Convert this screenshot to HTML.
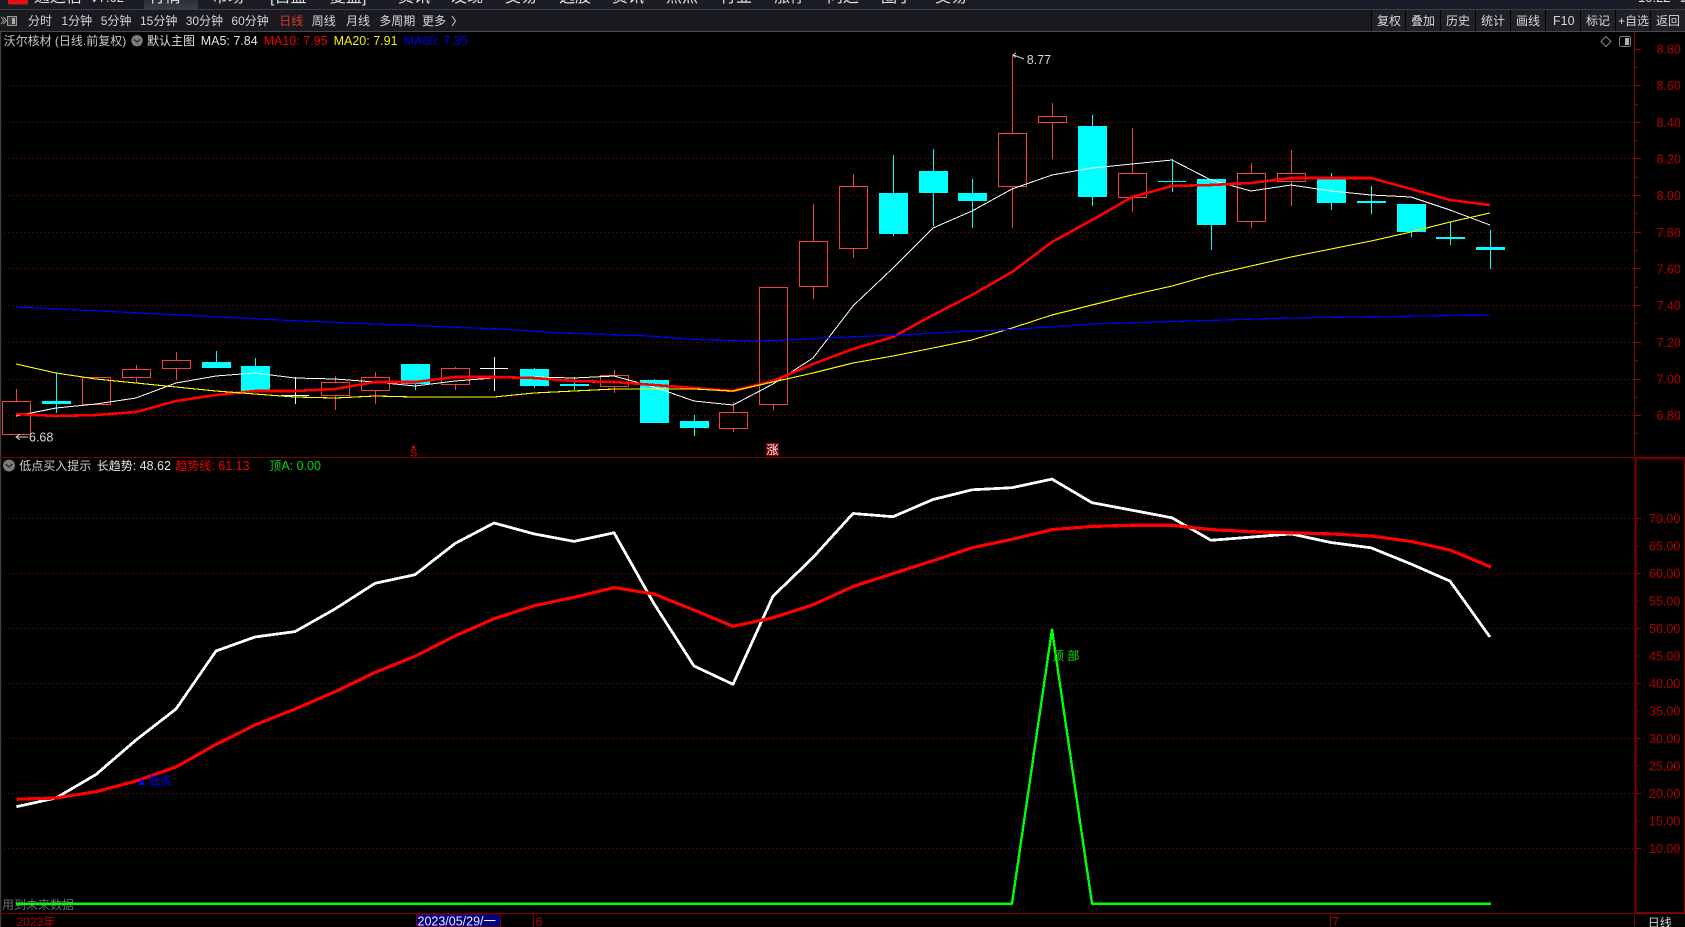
<!DOCTYPE html>
<html lang="zh"><head><meta charset="utf-8"><title>沃尔核材</title>
<style>
html,body{margin:0;padding:0;background:#000;width:1685px;height:927px;overflow:hidden}
svg{display:block;position:absolute;left:0;top:0}
text{font-family:"Liberation Sans","Noto Sans CJK SC",sans-serif;font-size:12px;white-space:pre}
.n{font-size:12.5px}
.ax{font-size:12.5px;fill:#b40000}
.tb{fill:#d6d6d6}
.top{font-size:16px;fill:#e0e0e0}
</style></head><body>
<svg width="1685" height="927" viewBox="0 0 1685 927" xmlns="http://www.w3.org/2000/svg">
<defs><linearGradient id="tab" x1="0" y1="0" x2="0" y2="1"><stop offset="0" stop-color="#2a2e37"/><stop offset="1" stop-color="#383c46"/></linearGradient></defs>
<rect width="1685" height="927" fill="#000"/>

<!-- top menu clipped -->
<rect x="0" y="0" width="1685" height="9" fill="#1a1d25"/>
<rect x="144" y="0" width="54" height="9" fill="url(#tab)"/>
<rect x="8" y="-3" width="20" height="7.5" rx="2" fill="#e01010"/>
<text class="top" x="34" y="2">通达信</text><text class="top" x="90" y="2" style="font-size:13px">V7.62</text>
<text class="top" x="149" y="2">行情</text><text class="top" x="212" y="2">市场</text>
<text class="top" x="270" y="2">[自盘</text><text class="top" x="330" y="2">复盘]</text>
<text class="top" x="398" y="2">资讯</text><text class="top" x="451" y="2">发现</text><text class="top" x="505" y="2">交易</text>
<text class="top" x="559" y="2">选股</text><text class="top" x="612" y="2">资讯</text><text class="top" x="666" y="2">热点</text>
<text class="top" x="720" y="2">行业</text><text class="top" x="774" y="2">涨停</text><text class="top" x="827" y="2">问达</text>
<text class="top" x="881" y="2">圈子</text><text class="top" x="935" y="2">交易</text>
<text class="top" x="1638" y="2" style="font-size:13px">10:22</text><text class="top" x="1680" y="2">二</text>

<!-- toolbar -->
<rect x="0" y="9" width="1685" height="1" fill="#3b3e46"/>
<rect x="0" y="10" width="1685" height="21" fill="#1b1b1f"/>
<rect x="0" y="31" width="1685" height="1" fill="#4a4a4e"/>
<rect x="1372" y="10" width="313" height="21" fill="#212125"/>
<path d="M1371.5 10V31M1405.5 10V31M1440.5 10V31M1475.5 10V31M1510.5 10V31M1545.5 10V31M1580.5 10V31M1615.5 10V31M1650.5 10V31" stroke="#050505" stroke-width="1"/>
<path d="M1 17l3 3.5-3 3.5M3.5 17l3 3.5-3 3.5" fill="none" stroke="#999" stroke-width="1"/>
<rect x="7.5" y="16.5" width="9" height="9" fill="#3a3a3a" stroke="#999"/>
<rect x="12" y="18" width="3" height="6" fill="#aaa"/>
<text class="tb" x="28" y="25">分时</text>
<text class="tb" x="61.4" y="25">1分钟</text>
<text class="tb" x="100.7" y="25">5分钟</text>
<text class="tb" x="140" y="25">15分钟</text>
<text class="tb" x="185.7" y="25">30分钟</text>
<text class="tb" x="231.4" y="25">60分钟</text>
<text x="279.3" y="25" fill="#e23030">日线</text>
<text class="tb" x="311.8" y="25">周线</text>
<text class="tb" x="346" y="25">月线</text>
<text class="tb" x="379.3" y="25">多周期</text>
<text class="tb" x="422" y="25">更多</text>
<path d="M452 16l3.5 5-3.5 5" fill="none" stroke="#d0d0d0" stroke-width="1"/>
<text class="tb" x="1377" y="25">复权</text>
<text class="tb" x="1411" y="25">叠加</text>
<text class="tb" x="1446" y="25">历史</text>
<text class="tb" x="1481" y="25">统计</text>
<text class="tb" x="1516" y="25">画线</text>
<text class="tb n" x="1553" y="25">F10</text>
<text class="tb" x="1586" y="25">标记</text>
<text class="tb" x="1618" y="25">+自选</text>
<text class="tb" x="1656" y="25">返回</text>

<!-- legend -->
<text x="3.6" y="45" fill="#c8c8c8">沃尔核材 (日线.前复权)</text>
<circle cx="137" cy="40.7" r="5.7" fill="#7c7c7c"/><path d="M134 39.5l3 2.5 3-2.5" fill="none" stroke="#222" stroke-width="1.2"/>
<text x="147" y="45" fill="#e0e0e0">默认主图</text>
<text class="n" x="200.7" y="45" fill="#e4e4e4">MA5: 7.84</text>
<text class="n" x="263.6" y="45" fill="#f00000">MA10: 7.95</text>
<text class="n" x="333.6" y="45" fill="#f0f000">MA20: 7.91</text>
<text class="n" x="403.6" y="45" fill="#0000e0">MA60: 7.35</text>
<path d="M1606 36.5l5 5-5 5-5-5z" fill="none" stroke="#8a8a8a"/>
<rect x="1619.5" y="36.5" width="11" height="10" rx="2" fill="none" stroke="#808080"/>
<rect x="1625" y="38" width="4" height="7" fill="#b0b0b0"/>

<!-- grids -->
<path d="M0 85.5H1634M0 122.5H1634M0 158.5H1634M0 195.5H1634M0 232.5H1634M0 268.5H1634M0 305.5H1634M0 342.5H1634M0 379.5H1634M0 415.5H1634M0 518.5H1634M0 573.5H1634M0 628.5H1634M0 683.5H1634M0 738.5H1634M0 793.5H1634M0 848.5H1634" stroke="#900000" stroke-width="1" stroke-dasharray="1 3" fill="none" shape-rendering="crispEdges"/>

<!-- frame -->
<path d="M0.5 32V927" stroke="#3c3c3c" stroke-width="1.5"/>
<path d="M0 457.5H1685M0 913.5H1634" stroke="#800000" stroke-width="1"/>
<path d="M1634.5 32V458M1634.5 914V927" stroke="#800000" stroke-width="1"/>
<path d="M1635.5 458V914M1635 913H1685" stroke="#800000" stroke-width="2" fill="none"/>
<path d="M1635 459H1684.5V913" stroke="#800000" stroke-width="1.2" fill="none"/>

<!-- upper axis -->
<g stroke="#a00000" stroke-width="1" fill="none" shape-rendering="crispEdges">
<path d="M1635 49.5h6M1635 85.5h6M1635 122.5h6M1635 158.5h6M1635 195.5h6M1635 232.5h6M1635 268.5h6M1635 305.5h6M1635 342.5h6M1635 379.5h6M1635 415.5h6"/>
<path d="M1635 67.5h3M1635 104.5h3M1635 140.5h3M1635 177.5h3M1635 213.5h3M1635 250.5h3M1635 287.5h3M1635 323.5h3M1635 360.5h3M1635 397.5h3M1635 433.5h3"/>
<path d="M1636 518.5h5M1636 573.5h5M1636 628.5h5M1636 683.5h5M1636 738.5h5M1636 793.5h5M1636 848.5h5M1636 546h3M1636 601h3M1636 656h3M1636 711h3M1636 766h3M1636 821h3"/>
</g>
<text class="ax" x="1656.5" y="53.5">8.80</text>
<text class="ax" x="1656.5" y="90">8.60</text>
<text class="ax" x="1656.5" y="127">8.40</text>
<text class="ax" x="1656.5" y="163.5">8.20</text>
<text class="ax" x="1656.5" y="200">8.00</text>
<text class="ax" x="1656.5" y="237">7.80</text>
<text class="ax" x="1656.5" y="273.5">7.60</text>
<text class="ax" x="1656.5" y="310">7.40</text>
<text class="ax" x="1656.5" y="347">7.20</text>
<text class="ax" x="1656.5" y="383.5">7.00</text>
<text class="ax" x="1656.5" y="420">6.80</text>
<text class="ax" x="1649" y="523">70.00</text>
<text class="ax" x="1649" y="550.5">65.00</text>
<text class="ax" x="1649" y="578">60.00</text>
<text class="ax" x="1649" y="605.5">55.00</text>
<text class="ax" x="1649" y="633">50.00</text>
<text class="ax" x="1649" y="660.5">45.00</text>
<text class="ax" x="1649" y="688">40.00</text>
<text class="ax" x="1649" y="715.5">35.00</text>
<text class="ax" x="1649" y="743">30.00</text>
<text class="ax" x="1649" y="770.5">25.00</text>
<text class="ax" x="1649" y="798">20.00</text>
<text class="ax" x="1649" y="825.5">15.00</text>
<text class="ax" x="1649" y="853">10.00</text>

<!-- candles -->
<g shape-rendering="crispEdges">
<g fill="none" stroke="#f04040" stroke-width="1">
<path d="M16.5 389V401M96.5 377V377M136.5 365V369M136.5 378V383M176.5 352V360M176.5 369V380M335.5 376V382M335.5 396V410M375.5 372V377M375.5 391V404M455.5 367V368M455.5 385V390M614.5 370V375M614.5 387V393M733.5 402V412M733.5 429V432M773.5 404V410M813.5 204V241M813.5 287V299M853.5 174V186M853.5 249V258M1012.5 55V133M1012.5 187V228M1052.5 103V116M1052.5 123V159M1132.5 128V173M1132.5 198V212M1251.5 163V173M1251.5 222V228M1291.5 150V173M1291.5 182V206"/>
<rect x="2.5" y="401.5" width="28" height="33"/>
<rect x="82.5" y="377.5" width="28" height="27"/>
<rect x="122.5" y="369.5" width="28" height="8"/>
<rect x="162.5" y="360.5" width="28" height="8"/>
<rect x="321.5" y="382.5" width="28" height="13"/>
<rect x="361.5" y="377.5" width="28" height="13"/>
<rect x="441.5" y="368.5" width="28" height="16"/>
<rect x="600.5" y="375.5" width="28" height="11"/>
<rect x="719.5" y="412.5" width="28" height="16"/>
<rect x="759.5" y="287.5" width="28" height="117"/>
<rect x="799.5" y="241.5" width="28" height="45"/>
<rect x="839.5" y="186.5" width="28" height="62"/>
<rect x="998.5" y="133.5" width="28" height="53"/>
<rect x="1038.5" y="116.5" width="28" height="6"/>
<rect x="1118.5" y="173.5" width="28" height="24"/>
<rect x="1237.5" y="173.5" width="28" height="48"/>
<rect x="1277.5" y="173.5" width="28" height="8"/>
</g>
<g fill="#00ffff">
<path d="M56.5 373V413M216.5 351V362M255.5 358V366M415.5 384V390M534.5 368V388M574.5 377V390M654.5 379V380M694.5 415V436M893.5 155V236M933.5 149V226M972.5 179V228M1092.5 115V206M1211.5 225V250M1331.5 173V210M1371.5 186V214M1411.5 232V237M1450.5 222V245M1490.5 230V269M1172.5 159V192M1158 181.5H1186" stroke="#00ffff" stroke-width="1"/>
<rect x="42" y="401" width="29" height="3"/>
<rect x="202" y="362" width="29" height="6"/>
<rect x="241" y="366" width="29" height="25"/>
<rect x="401" y="364" width="29" height="20"/>
<rect x="520" y="369" width="29" height="17"/>
<rect x="560" y="384" width="29" height="2"/>
<rect x="640" y="380" width="29" height="43"/>
<rect x="680" y="421" width="29" height="7"/>
<rect x="879" y="193" width="29" height="41"/>
<rect x="919" y="171" width="29" height="22"/>
<rect x="958" y="193" width="29" height="8"/>
<rect x="1078" y="126" width="29" height="71"/>
<rect x="1197" y="179" width="29" height="46"/>
<rect x="1317" y="179" width="29" height="24"/>
<rect x="1357" y="201" width="29" height="2"/>
<rect x="1397" y="204" width="29" height="28"/>
<rect x="1436" y="237" width="29" height="2"/>
<rect x="1476" y="247" width="29" height="3"/>
</g>
<path d="M295.5 377V404M281 395.5H309M494.5 357V391M480 368.5H508" stroke="#fff" stroke-width="1" fill="none"/>
</g>

<!-- MA lines -->
<g fill="none" stroke-linejoin="round" shape-rendering="crispEdges">
<polyline stroke="#fff" stroke-width="1" points="16,416 56,408 96,404 136,398 176,383 216,376 255,373 295,378 335,379 375,382 415,386 455,381 494,378 534,377 574,378 614,376 654,387 694,401 733,405 773,384 813,358 853,306 893,268 933,228 972,211 1012,189 1052,175 1092,168 1132,164 1172,160 1211,180 1251,191 1291,185 1331,191 1371,195 1411,197 1450,210 1490,225"/>
<polyline stroke="#ff0000" stroke-width="2.6" points="16,414 56,416 96,415 136,412 176,401 216,395 255,391 295,391 335,389 375,382 415,382 455,377 494,377 534,378 574,381 614,382 654,385 694,388 733,391 773,381 813,364 853,349 893,337 933,315 972,295 1012,272 1052,242 1092,220 1132,197 1172,186 1211,185 1251,183 1291,178 1331,178 1371,178 1411,189 1450,200 1490,205"/>
<polyline stroke="#ffff00" stroke-width="1.1" points="16,364 56,373 96,379 136,383 176,387 216,391 255,394 295,397 335,398 375,396 415,397 455,397 494,397 534,393 574,391 614,389 654,389 694,389 733,391 773,382 813,373 853,363 893,356 933,348 972,340 1012,328 1052,315 1092,305 1132,295 1172,286 1211,275 1251,266 1291,257 1331,249 1371,241 1411,232 1450,222 1490,213"/>
<polyline stroke="#0000ff" stroke-width="1.2" points="16,307 100,311 200,316 300,321 400,325 500,329 560,333 595,334 649,336 703,340 760,341 788,340 846,337 899,335 953,332 1000,330 1052,327 1092,324 1290,318 1490,315"/>
</g>

<!-- annotations upper -->
<path d="M1024 59L1013.5 55M1016 53l-3 2 2.5 2.5" fill="none" stroke="#d0d0d0" stroke-width="1"/>
<text class="n" x="1026.7" y="64" fill="#d8d8d8">8.77</text>
<path d="M16 437H28M20 434l-4 3 4 3" fill="none" stroke="#d0d0d0" stroke-width="1"/>
<text class="n" x="29" y="441.5" fill="#d8d8d8">6.68</text>
<path d="M413.5 445l-2.5 3.5h5z" fill="#e00000"/>
<text x="410" y="456.5" fill="#e00000" style="font-size:11px">S</text>
<rect x="766" y="443" width="13" height="13" fill="#800000"/>
<text x="766.5" y="454" fill="#fff">涨</text>

<!-- lower legend -->
<circle cx="9" cy="465.5" r="6" fill="#7c7c7c"/><path d="M5.5 464l3.5 3 3.5-3" fill="none" stroke="#222" stroke-width="1.2"/>
<text x="19.3" y="470" fill="#d0d0d0">低点买入提示</text>
<text x="96.7" y="470" fill="#e4e4e4">长趋势<tspan class="n">: 48.62</tspan></text>
<text x="175.3" y="470" fill="#f00000">趋势线<tspan class="n">: 61.13</tspan></text>
<text x="269.3" y="470" fill="#00d800">顶<tspan class="n">A: 0.00</tspan></text>

<!-- lower lines -->
<g fill="none" stroke-linejoin="round" shape-rendering="crispEdges">
<polyline stroke="#00ff00" stroke-width="2.4" points="16,903.7 1012,903.7 1052,629.5 1092,903.7 1491,903.7"/>
<polyline stroke="#fff" stroke-width="2.8" points="16.4,806.7 56,798 96,774.5 136,740 176,709 216,651 255,637 295,631.6 335,609 375,583.3 415,574.7 455,543.5 494,523 534,533.9 574,541.4 614,532.8 654,603.7 694,666 733,684.3 773,596.2 813,557.5 853,513.5 893,516.7 933,499.5 972,489.8 1012,487.7 1052,479.1 1092,502.7 1132,510.2 1172,517.8 1211,540.3 1251,537.1 1291,533.9 1331,542.5 1371,547.8 1411,564 1450,581.1 1490,637"/>
<polyline stroke="#ff0000" stroke-width="3.2" points="16.4,799.2 56,798 96,791.7 136,781 176,767 216,744.4 255,725 295,709 335,691.8 375,672.4 415,656.3 455,636 494,618.7 534,605.8 574,597.3 614,587.6 654,594 694,610 733,626.3 773,617.7 813,604.8 853,586.5 893,573.6 933,560.7 972,547.8 1012,539.3 1052,529.6 1092,526.4 1132,525.3 1172,525.3 1211,529.6 1251,531.7 1291,532.8 1331,533.9 1371,536 1411,541.4 1450,550 1491,567"/>
</g>
<path d="M141.5 778l-3.5 7h7z" fill="#0000ff"/>
<text x="148" y="785" fill="#0000ff">低买</text>
<text x="1052" y="660" fill="#00e000">顶 部</text>

<!-- bottom -->
<text x="2" y="909" fill="#6e6e6e">用到未来数据</text>
<polyline points="16,903.7 100,903.7" stroke="#00ff00" stroke-width="2.4" fill="none" shape-rendering="crispEdges"/>
<text x="16.5" y="926" fill="#b00000">2023年</text>
<rect x="416.5" y="914" width="84" height="13" fill="#000080" stroke="#800000" stroke-width="1"/>
<text class="n" x="417.5" y="925.5" fill="#f0f0f0">2023/05/29/一</text>
<path d="M533.5 914V927M1330.5 914V927" stroke="#800000"/>
<text class="n" x="535.5" y="926" fill="#b00000">6</text>
<text class="n" x="1332" y="926" fill="#b00000">7</text>
<text x="1647.7" y="927" fill="#d8d8d8">日线</text>
</svg>
</body></html>
